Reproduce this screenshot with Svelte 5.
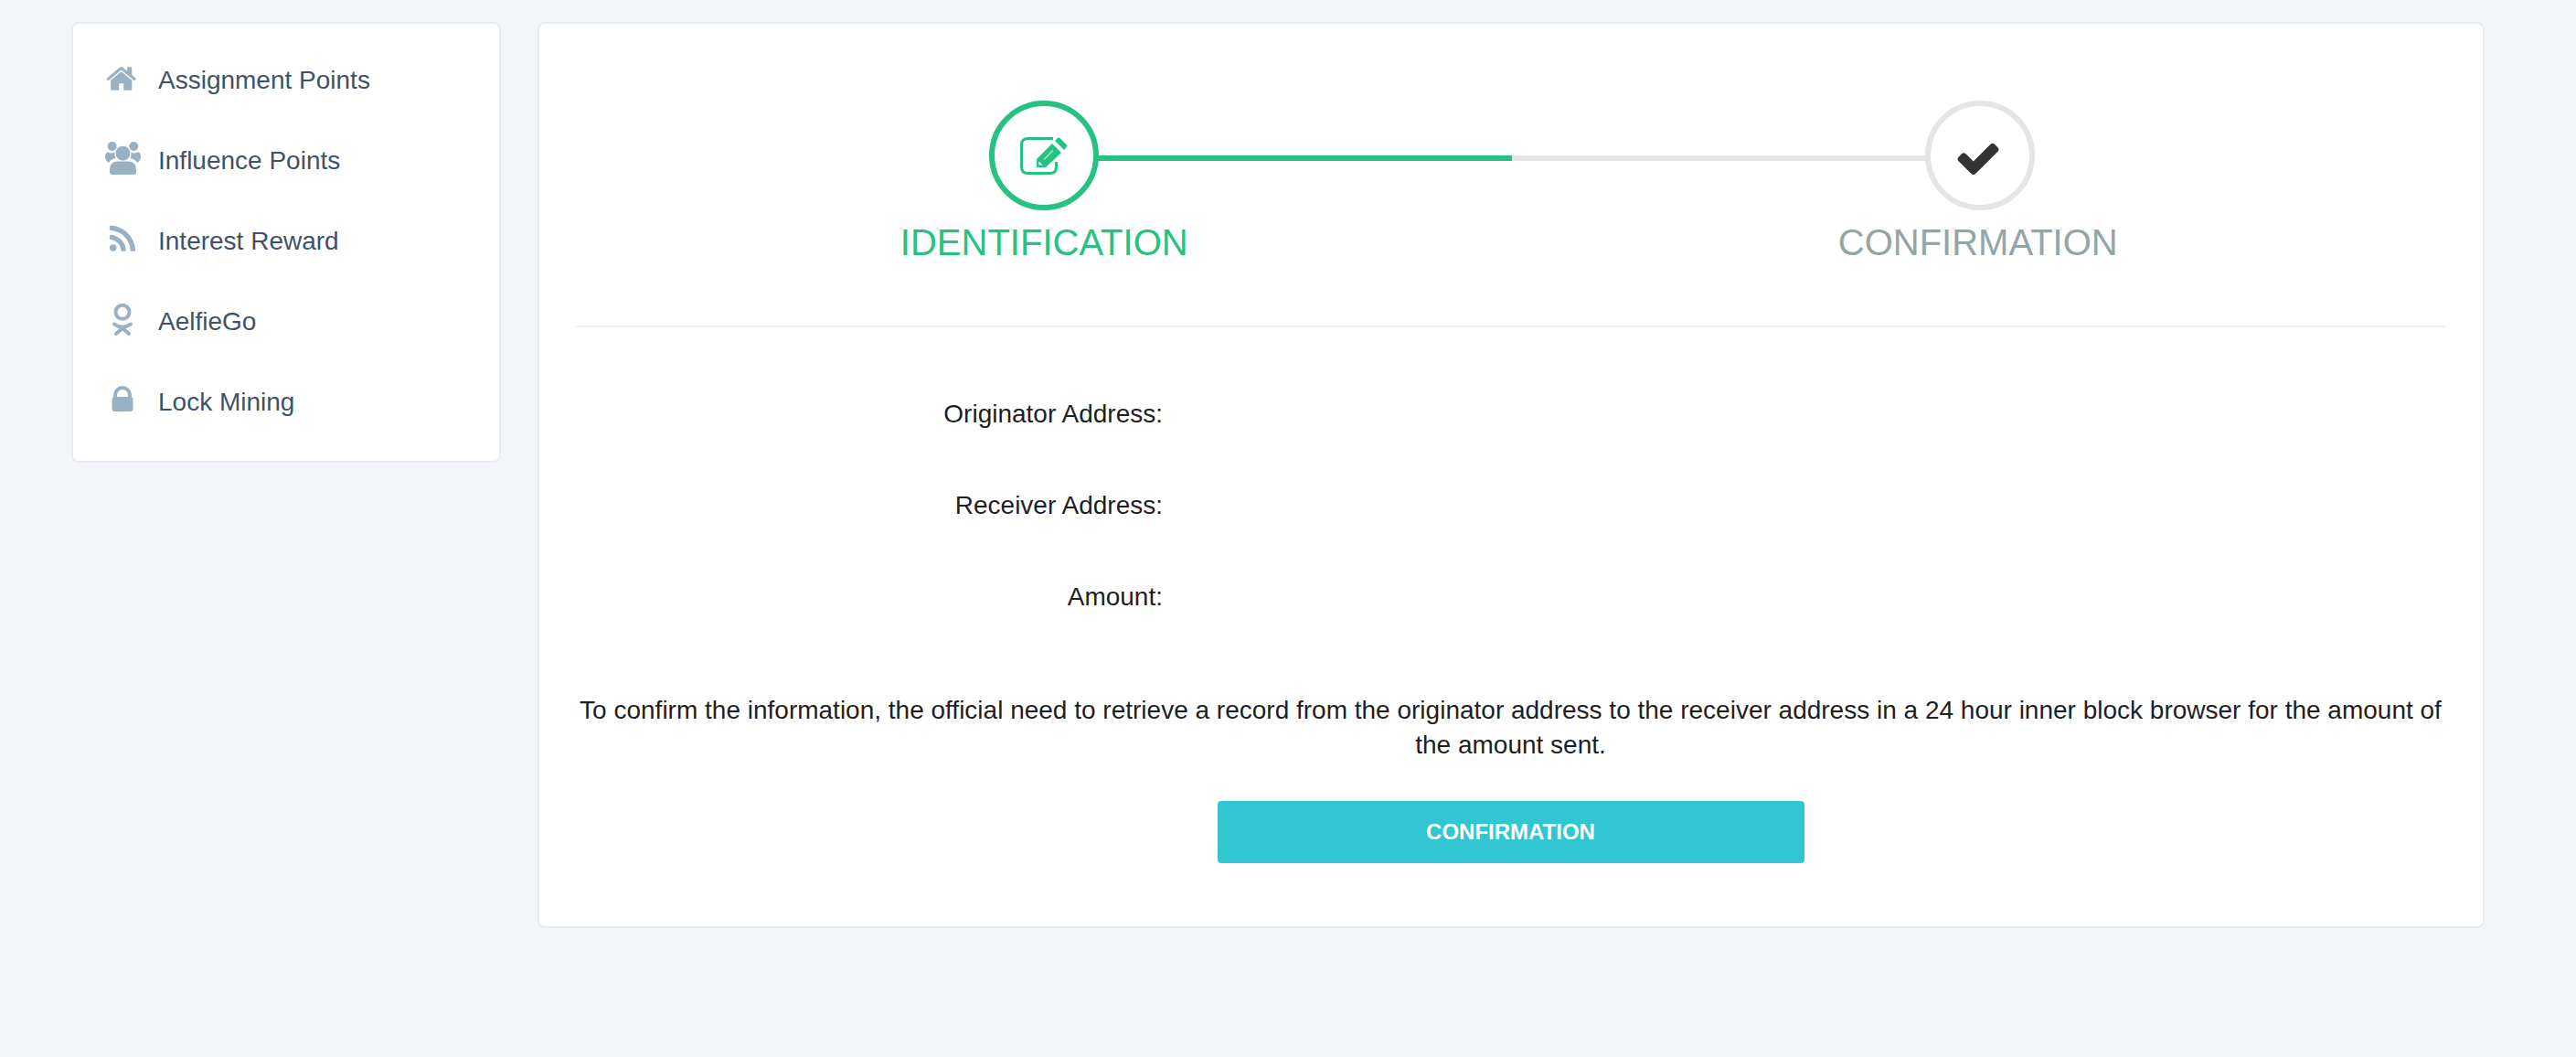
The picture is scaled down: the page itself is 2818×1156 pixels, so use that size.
<script>
  const D = {
    home: 'M1408 992v480q0 26-19 45t-45 19h-384v-384h-256v384h-384q-26 0-45-19t-19-45v-480q0-1 .5-3t.5-3l575-474 575 474q1 2 1 6zm223-69l-62 74q-8 9-21 11h-3q-13 0-21-7l-692-577-692 577q-12 8-24 7-13-2-21-11l-62-74q-8-10-7-23.500t11-21.500l719-599q32-26 76-26t76 26l244 204v-195q0-14 9-23t23-9h192q14 0 23 9t9 23v408l219 182q10 8 11 21.500t-7 23.500z',
    rss: 'M576 1344q0 80-56 136t-136 56-136-56-56-136 56-136 136-56 136 56 56 136zm512 123q2 28-17 48-18 21-47 21h-135q-25 0-43-16.500t-20-41.500q-22-229-184.500-391.500t-391.500-184.500q-25-2-41.500-20t-16.500-43v-135q0-29 21-47 17-17 43-17h5q160 13 306 80.500t259 181.500q114 113 181.500 259t80.500 306zm512 2q2 27-18 47-18 20-46 20h-143q-26 0-44.500-17.500t-19.500-42.500q-12-215-101-408.500t-231.500-336-336-231.500-408.500-102q-25-1-42.500-19.500t-17.500-43.500v-143q0-28 20-46 18-18 44-18h3q262 13 501.500 120t425.500 294q187 186 294 425.500t120 501.500z',
    check: 'M1671 566q0 40-28 68l-724 724-136 136q-28 28-68 28t-68-28l-136-136-362-362q-28-28-28-68t28-68l136-136q28-28 68-28t68 28l294 295 656-657q28-28 68-28t68 28l136 136q28 28 28 68z'
  };
  const menu = [
    { label: 'Assignment Points', icon: 'home' },
    { label: 'Influence Points', icon: 'group' },
    { label: 'Interest Reward', icon: 'rss' },
    { label: 'AelfieGo', icon: 'ok' },
    { label: 'Lock Mining', icon: 'lock' }
  ];
  const fields = ['Originator Address:', 'Receiver Address:', 'Amount:'];
</script>

<div class="page">
  <aside class="card side">
    {#each menu as m}
      <a class="item" href="#top">
        <span class="ico">
          {#if m.icon === 'ok'}
            <svg viewBox="0 0 36 36" width="36" height="36">
              <circle cx="18" cy="9.300" r="7.500" fill="none" stroke="#9ab1c4" stroke-width="4"/>
              <path d="M9 22.500Q18 29 27 22.500M18 27L11 33M18 27L25 33" fill="none" stroke="#9ab1c4" stroke-width="4" stroke-linecap="round"/>
            </svg>
          {:else if m.icon === 'lock'}
            <svg viewBox="0 0 36 36" width="36" height="36">
              <rect x="6.500" y="14" width="23" height="16" rx="3" fill="#9ab1c4"/>
              <path d="M10 16V12a8 8 0 0 1 16 0V16" fill="none" stroke="#9ab1c4" stroke-width="4"/>
            </svg>
          {:else if m.icon === 'group'}
            <svg class="grp" viewBox="0 0 39 36" width="39" height="36" fill="#9ab1c4">
              <circle cx="7.700" cy="5" r="5"/>
              <circle cx="31.300" cy="5" r="5"/>
              <circle cx="19.500" cy="12.700" r="8"/>
              <path d="M5 33V30Q5 21.500 14 21.500H25Q34 21.500 34 30V33Q34 36 31 36H8Q5 36 5 33Z"/>
              <path d="M0 16Q0 11.500 3.500 11.500Q7 13.500 10.500 11.500Q10 16 11.500 18Q6 19 4 23Q0 21 0 16Z"/>
              <path d="M39 16Q39 11.500 35.500 11.500Q32 13.500 28.500 11.500Q29 16 27.500 18Q33 19 35 23Q39 21 39 16Z"/>
            </svg>
          {:else}
            <svg viewBox="0 0 1792 1792" width="36" height="36"><path d={D[m.icon]} fill="#9ab1c4"/></svg>
          {/if}
        </span>
        <span class="txt">{m.label}</span>
      </a>
    {/each}
  </aside>

  <main class="card content">
    <div class="steps">
      <div class="step done">
        <div class="bar"></div>
        <div class="circle">
          <svg viewBox="0 0 52 41" width="52" height="41">
            <path d="M36 1.500H8.500Q1.500 1.500 1.500 8.500V32.500Q1.500 39.500 8.500 39.500H32.500Q39.500 39.500 39.500 32.500V27" fill="none" stroke="#26c281" stroke-width="3"/>
            <path d="M18 33V24L35 7L45 17L28 33Z" fill="#26c281"/>
            <path d="M38 4L41 1Q42 0 43.500 1L51 8.500Q52 9.500 51 10.500L48 14Z" fill="#26c281"/>
            <path d="M20.500 30.500V26.500L24.500 30.500Z" fill="#fff"/>
            <path d="M26 24.500L36 14.500" stroke="#fff" stroke-width="1.500" fill="none" opacity=".6"/>
          </svg>
        </div>
        <div class="name">IDENTIFICATION</div>
      </div>
      <div class="step">
        <div class="bar"></div>
        <div class="circle second"><svg class="tick" viewBox="0 0 1792 1792" width="52" height="52"><path d={D.check} fill="#333"/></svg></div>
        <div class="name">CONFIRMATION</div>
      </div>
    </div>

    <div class="form">
      {#each fields as f}
        <div class="row">{f}</div>
      {/each}
    </div>

    <p class="note">To confirm the information, the official need to retrieve a record from the originator address to the receiver address in a 24 hour inner block browser for the amount of the amount sent.</p>

    <div class="actions"><button type="button">CONFIRMATION</button></div>
  </main>
</div>

<style>
  :global(body) {
    margin: 0;
    background: #f3f5f9;
    font-family: "Liberation Sans", Arial, sans-serif;
  }
  .page {
    display: flex;
    align-items: flex-start;
    gap: 40px;
    padding: 24px 100px 0 78px;
    min-height: 1132px;
  }
  .card {
    background: #fff;
    border: 2px solid #e7ecf1;
    border-radius: 8px;
    box-sizing: border-box;
  }
  .side {
    width: 470px;
    height: 482px;
    padding: 19px 0;
    flex: none;
  }
  .item {
    display: flex;
    align-items: center;
    height: 88px;
    padding-left: 36px;
    text-decoration: none;
    color: #3f5368;
  }
  .ico {
    width: 36px;
    height: 36px;
    margin-top: -6px;
    margin-right: 21px;
    display: block;
  }
  .ico svg { display: block; }
  .ico svg.grp { margin: -1px 0 0 -1px; }
  .txt { font-size: 28px; margin-top: -2px; }
  .content {
    width: 2130px;
    height: 991px;
    padding: 84px 41px 0 40px;
    flex: none;
  }
  .steps {
    display: flex;
    height: 246px;
    border-bottom: 2px solid #eef1f5;
  }
  .step {
    flex: 1;
    position: relative;
    display: flex;
    flex-direction: column;
    align-items: center;
    color: #95a5a6;
  }
  .bar {
    position: absolute;
    top: 60px;
    left: 0;
    width: 50%;
    height: 6px;
    background: #e5e5e5;
  }
  .step.done {
    color: #26c281;
    left: 1px;
    z-index: 1;
  }
  .step.done .bar {
    left: 50%;
    background: #26c281;
  }
  .circle {
    position: relative;
    width: 120px;
    height: 120px;
    box-sizing: border-box;
    border: 6px solid #e5e5e5;
    border-radius: 50%;
    background: #fff;
    display: flex;
    align-items: center;
    justify-content: center;
  }
  .circle.second { left: 2px; }
  .tick { margin: 5px 3px 0 0; }
  .step.done .circle { border-color: #26c281; }
  .name {
    font-size: 40px;
    line-height: 46px;
    margin-top: 12px;
  }
  .form { padding-top: 45px; }
  .row {
    height: 100px;
    width: 642px;
    text-align: right;
    font-size: 28px;
    line-height: 100px;
    color: #1f1f1f;
  }
  .note {
    margin: 0;
    padding-top: 55px;
    text-align: center;
    font-size: 28px;
    line-height: 38px;
    color: #1f1f1f;
  }
  .actions {
    display: flex;
    justify-content: center;
    padding-top: 42px;
  }
  button {
    width: 642px;
    height: 68px;
    border: 0;
    border-radius: 4px;
    background: #32c5d2;
    color: #fff;
    font-family: inherit;
    font-weight: 700;
    font-size: 24px;
  }
</style>
